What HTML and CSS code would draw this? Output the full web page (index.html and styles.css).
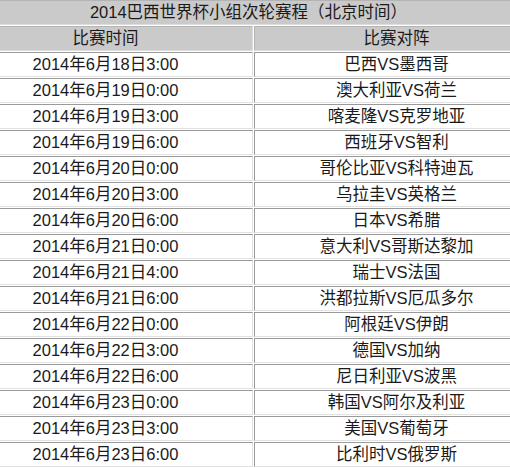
FILE: index.html
```html
<!DOCTYPE html>
<html lang="zh">
<head>
<meta charset="utf-8">
<title>2014巴西世界杯小组次轮赛程</title>
<link rel="stylesheet" href="styles.css">
</head>
<body>
<div class="frame">
<table class="schedule">
  <tr><td class="title" colspan="2">2014巴西世界杯小组次轮赛程（北京时间）</td></tr>
  <tr><td class="head">比赛时间</td><td class="head">比赛对阵</td></tr>
  <tr><td>2014年6月18日3:00</td><td>巴西VS墨西哥</td></tr>
  <tr><td>2014年6月19日0:00</td><td>澳大利亚VS荷兰</td></tr>
  <tr><td>2014年6月19日3:00</td><td>喀麦隆VS克罗地亚</td></tr>
  <tr><td>2014年6月19日6:00</td><td>西班牙VS智利</td></tr>
  <tr><td>2014年6月20日0:00</td><td>哥伦比亚VS科特迪瓦</td></tr>
  <tr><td>2014年6月20日3:00</td><td>乌拉圭VS英格兰</td></tr>
  <tr><td>2014年6月20日6:00</td><td>日本VS希腊</td></tr>
  <tr><td>2014年6月21日0:00</td><td>意大利VS哥斯达黎加</td></tr>
  <tr><td>2014年6月21日4:00</td><td>瑞士VS法国</td></tr>
  <tr><td>2014年6月21日6:00</td><td>洪都拉斯VS厄瓜多尔</td></tr>
  <tr><td>2014年6月22日0:00</td><td>阿根廷VS伊朗</td></tr>
  <tr><td>2014年6月22日3:00</td><td>德国VS加纳</td></tr>
  <tr><td>2014年6月22日6:00</td><td>尼日利亚VS波黑</td></tr>
  <tr><td>2014年6月23日0:00</td><td>韩国VS阿尔及利亚</td></tr>
  <tr><td>2014年6月23日3:00</td><td>美国VS葡萄牙</td></tr>
  <tr><td>2014年6月23日6:00</td><td>比利时VS俄罗斯</td></tr>
</table>
</div>
</body>
</html>
```
FILE: styles.css
```css
html, body {
  margin: 0;
  padding: 0;
  background: #fff;
}
.frame {
  width: 510px;
  height: 468px;
  overflow: hidden;
}
.schedule {
  margin-left: -43px;
  margin-top: -1px;
  width: 583px;
  border-collapse: separate;
  border-spacing: 1px;
  background: #fff;
  font-family: "Liberation Sans", "Noto Sans CJK SC", sans-serif;
  font-size: 16.5px;
  color: #1a1a1a;
}
.schedule td {
  height: 23px;
  line-height: 23px;
  padding: 0;
  text-align: center;
  white-space: nowrap;
  border: 1px solid;
  border-color: #9a9a9a #e2e2e2 #e2e2e2 #9a9a9a;
}
.schedule td:first-child {
  width: 293px;
}
.schedule .title,
.schedule .head {
  background: #cacaca;
  border-color: #b4b4b4 #dcdcdc #dcdcdc #b4b4b4;
}
```
